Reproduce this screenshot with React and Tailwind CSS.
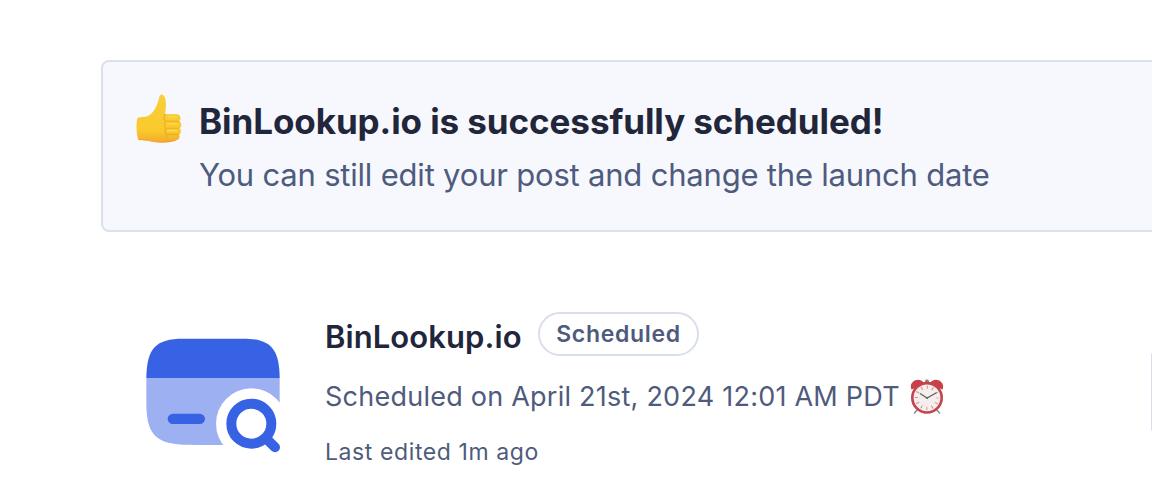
const FONT = 'font-[Inter,"Liberation_Sans",sans-serif]';

function ThumbsUp({ className }) {
  return (
    <svg viewBox="0 0 46 49" className={className} aria-hidden="true">
      <defs>
        <linearGradient id="skin" x1="0" y1="0" x2="0" y2="1">
          <stop offset="0" stopColor="#f9cf3a" />
          <stop offset="0.75" stopColor="#fac92c" />
          <stop offset="1" stopColor="#f3ab2b" />
        </linearGradient>
      </defs>
      <path
        d="M1.500 24C4 22.800 9 23.300 12 22C18 19 21.500 11 23 4C23.500 0.500 25.500 -0.500 27.500 1.500C30.500 4.500 30.500 12 29 20L41 20.300C45 20.500 45.500 26 43 27.300C46.500 29 45.500 33.500 43.500 34.300C45.800 36 45 39.500 43 40.500C44.500 43 43 46.300 40 46.300C34 49.500 21 49 13.500 46.500L2.500 46C0 40 0 29 1.500 24Z"
        fill="url(#skin)"
      />
      <path d="M29 20.500C27.500 22 27.500 25.500 29.500 27.300L43 27.300M29.500 27.300C28 30 28 32 29.500 34.300L43 34.300M29.500 34.300C28.500 36.500 29 39 30.500 40.500L42.500 40.500M30.500 40.500C29.500 43 31 45.500 33 46.800" fill="none" stroke="#ebad26" strokeWidth="1.1" strokeLinecap="round" />
      <path d="M32 22.800H40M32 29.800H41M32 36.600H40.500" fill="none" stroke="#fddb50" strokeWidth="1.300" strokeLinecap="round" />
      <path d="M2.500 45.500C11 45.500 15 47.800 22 48C30 48.300 36 47.500 40 46" fill="none" stroke="#ef9c36" strokeWidth="0.900" />
    </svg>
  );
}

function AlarmClock({ className }) {
  return (
    <svg viewBox="0 0 34 36" className={className} aria-hidden="true">
      <path d="M8 30L4.500 34M26 30L29.500 34" stroke="#8f8f93" strokeWidth="1.600" strokeLinecap="round" />
      <rect x="15" y="0.500" width="4" height="4" rx="1.500" fill="#8b8388" />
      <path d="M1.500 10.500C-1 5 4 0.500 8.500 0.800C11.500 1 14 3 14.500 5.500Z" fill="#c8404a" />
      <path d="M32.500 10.500C35 5 30 0.500 25.500 0.800C22.500 1 20 3 19.500 5.500Z" fill="#c8404a" />
      <circle cx="17" cy="18.800" r="14.700" fill="#f4efed" stroke="#c5434c" strokeWidth="2.600" />
      <circle cx="17" cy="18.800" r="10.600" fill="none" stroke="#d9848a" strokeWidth="3.400" strokeDasharray="0.900 4.650" strokeDashoffset="0.450" />
      <path d="M10.500 14.800L17 19L26 14" fill="none" stroke="#59635f" strokeWidth="1.300" strokeLinecap="round" />
      <circle cx="17" cy="18.900" r="1" fill="#59635f" />
    </svg>
  );
}

function CardSearchLogo({ className }) {
  return (
    <svg viewBox="33 39 402 345" className={className} aria-hidden="true">
      <path d="M34 158H434V240L300 360H180C75 360 34 345 34 235Z" fill="#9db0f1" />
      <path d="M34 159C35 70 62 41 145 41H323C406 41 433 70 434 159Z" fill="#3662e3" />
      <rect x="98" y="266" width="112" height="31" rx="15.500" fill="#3662e3" />
      <circle cx="349" cy="296" r="106" fill="#fff" />
      <circle cx="349" cy="296" r="60" fill="none" stroke="#3662e3" strokeWidth="30" />
      <path d="M398 345L420 367" stroke="#3662e3" strokeWidth="30" strokeLinecap="round" />
    </svg>
  );
}

function Banner() {
  return (
    <section className="flex h-[172px] w-[1100px] shrink-0 rounded-lg border-2 border-[#d9e1ea] bg-[#f6f8fe] pl-[33px] pt-[32px]">
      <ThumbsUp className="h-[49px] w-[46px] shrink-0" />
      <div className="ml-[17px] whitespace-nowrap">
        <h1 className="mt-[5px] text-[35px] leading-[44px] font-bold tracking-[-0.08px] text-[#21263a]">
          BinLookup.io is successfully scheduled!
        </h1>
        <p className="mt-[12px] text-[31px] leading-[40px] tracking-[-0.2px] text-[#4f5b7d]">
          You can still edit your post and change the launch date
        </p>
      </div>
    </section>
  );
}

function Post() {
  return (
    <article className="mt-[80px] flex pl-[45px]">
      <CardSearchLogo className="mt-[26px] h-[115px] w-[134px] shrink-0" />
      <div className="ml-[45px] whitespace-nowrap text-[#4f5b7d]">
        <div className="flex h-11 items-center">
          <h2 className="w-[213px] pt-[6px] text-[31px] leading-[40px] font-semibold tracking-[0.08px] text-[#21263a]">
            BinLookup.io
          </h2>
          <span className="flex h-11 w-[161px] items-center justify-center rounded-full border-2 border-[#d9dfea] text-[23px] font-semibold tracking-[0.7px]">
            Scheduled
          </span>
        </div>
        <div className="mt-[21px] flex h-10 items-center">
          <p className="w-[585px] text-[27px] leading-[40px] tracking-[0.24px]">
            Scheduled on April 21st, 2024 12:01 AM PDT
          </p>
          <AlarmClock className="h-9 w-[34px]" />
        </div>
        <p className="mt-[19px] text-[23px] leading-8 tracking-[0.6px]">Last edited 1m ago</p>
      </div>
      <div className="-mr-8 ml-auto mt-[40px] h-[80px] w-[33px] shrink-0 rounded-l-[3px] border-l-2 border-[#d9dfea]" />
    </article>
  );
}

export default function App() {
  return (
    <main className={`h-[494px] w-[1152px] overflow-hidden bg-white pl-[101px] pt-[60px] ${FONT}`}>
      <Banner />
      <Post />
    </main>
  );
}
